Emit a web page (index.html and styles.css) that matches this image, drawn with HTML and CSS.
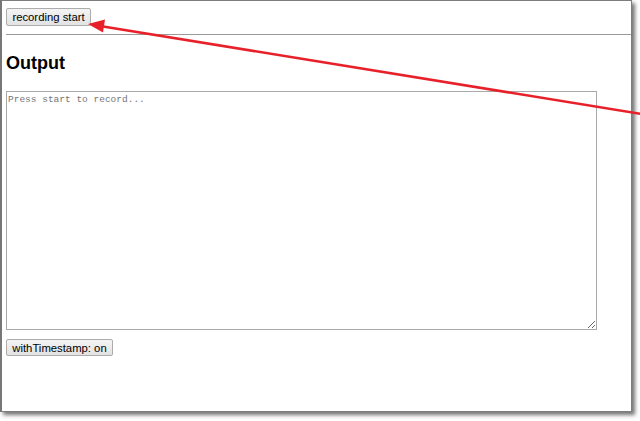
FILE: index.html
```html
<!DOCTYPE html>
<html lang="en">
<head>
    <meta charset="UTF-8">
    <title>recording</title>
    <link rel="stylesheet" href="styles.css">
</head>
<body>

<div class="window">
    <button class="btn" id="btnRec">recording start</button>
    <hr class="line">
    <h2 class="title">Output</h2>
    <textarea class="output" placeholder="Press start to record..."></textarea>
    <button class="btn" id="btnStamp">withTimestamp: on</button>
</div>

<!-- 注释箭头 -->
<svg class="arrow" width="640" height="421" viewBox="0 0 640 421">
    <line x1="100" y1="26" x2="648" y2="115" stroke="#e8202a" stroke-width="2.6"/>
    <polygon points="88,24 103,32.5 105,19.5" fill="#e8202a"/>
</svg>

</body>
</html>
```

FILE: styles.css
```css
*{
    margin: 0;
    padding: 0;
    box-sizing: border-box;
}
body{
    width: 640px;
    height: 421px;
    background-color: #fff;
    position: relative;
    overflow: hidden;
    font-family: "Liberation Sans", Arial, sans-serif;
}
.window{
    width: 632px;
    height: 412px;
    border: 1px solid #7d7d7d;
    border-left: 2px solid #777;
    background-color: #fff;
    box-shadow: 3px 3px 4px rgba(0,0,0,0.55);
    padding: 7px 0 0 4px;
}
.btn{
    display: block;
    height: 18px;
    padding: 0;
    white-space: nowrap;
    text-align: center;
    font-family: "Liberation Sans", Arial, sans-serif;
    font-size: 11.3px;
    color: #000;
    background: linear-gradient(#f4f4f4, #e2e2e2);
    border: 1px solid #acacac;
    border-radius: 2px;
}
#btnRec{
    width: 85px;
}
#btnStamp{
    width: 107px;
    height: 17px;
}
.line{
    border: 0;
    border-top: 1px solid #9a9a9a;
    margin-top: 8px;
}
.title{
    font-size: 18px;
    line-height: 21px;
    font-weight: bold;
    margin: 18px 0 17px;
    color: #000;
}
.output{
    display: block;
    width: 591px;
    height: 239px;
    border: 1px solid #a9a9a9;
    padding: 2px 1px;
    font-family: "Liberation Mono", "DejaVu Sans Mono", monospace;
    font-size: 9.5px;
    margin-bottom: 9px;
}
.output::placeholder{
    color: #757575;
}
.arrow{
    position: absolute;
    left: 0;
    top: 0;
    pointer-events: none;
}
```
